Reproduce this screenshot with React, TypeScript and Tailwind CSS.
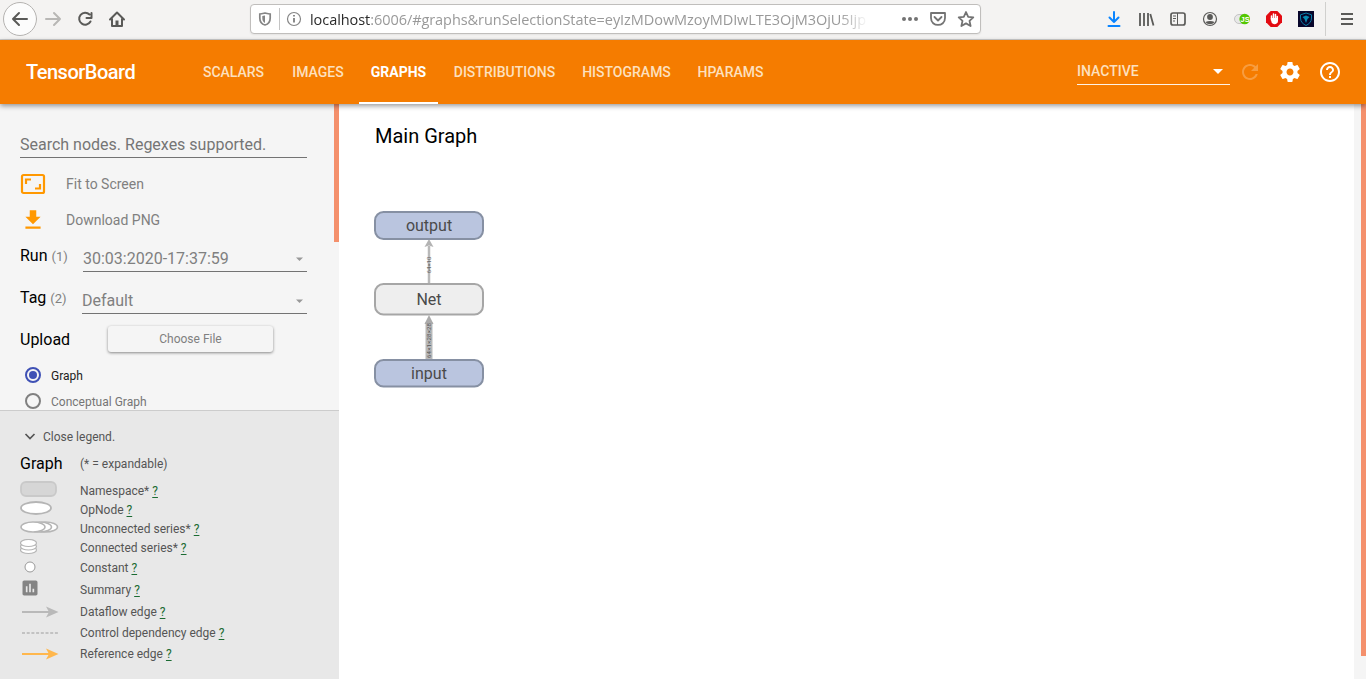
import React from "react";

function Icon({ d, className = "", size = 24 }: { d: string; className?: string; size?: number }) {
  return (
    <svg width={size} height={size} viewBox="0 0 24 24" fill="currentColor" className={`shrink-0 ${className}`}>
      <path d={d} />
    </svg>
  );
}

function BrowserBar() {
  return (
    <header className="flex h-10 shrink-0 items-start border-b border-[#ccc] bg-[#f4f3f2] text-[#5a5a58]">
      <svg width="249" height="39" viewBox="0 0 249 39" fill="none" stroke="currentColor" strokeWidth="2" strokeLinecap="round" strokeLinejoin="round" className="shrink-0">
        <circle cx="20" cy="19" r="16.5" fill="#fcfcfc" stroke="#b5b3b1" strokeWidth="1" />
        <path d="M27 19H13M19 13L13 19L19 25" />
        <path d="M46 19H60M54 13L60 19L54 25" stroke="#b8b7b5" />
        <path d="M89.5 14.5A6 6 0 1 0 90.5 21.5M91.5 13V18H86.5" />
        <path d="M110 19.5L117 12.5L124 19.5M112 18.5V26H122V18.5" />
        <path d="M115.500 20.500h3v5h-3z" fill="currentColor" stroke="none" />
      </svg>
      <div className="mt-1 ml-[1px] flex h-[30px] w-[731px] items-center rounded border border-[#c0bebc] bg-white shadow-[0_1px_2px_#0001]">
        <svg width="58" height="28" viewBox="0 0 58 28" fill="none" stroke="#858585" strokeWidth="1.7" className="shrink-0">
          <path d="M8.8 9C11 9 13 8.2 14 8C15 8.2 17 9 19.200 9V13C19.200 17 17 19.300 14 20C11 19.300 8.800 17 8.800 13Z" />
          <path d="M14 10.500C13 10.700 12 11 11.300 11V13C11.300 16 12.500 17.300 14 18Z" fill="#858585" stroke="none" />
          <path d="M28.500 3V25" stroke="#c4c4c4" strokeWidth="1" />
          <circle cx="43" cy="14" r="6.500" strokeWidth="1.200" />
          <path d="M43 13V17.500M43 10V11.600" strokeWidth="1.900" />
        </svg>
        <div className="w-[559px] shrink-0 pt-0.5 pl-[1px] font-['Open_Sans',sans-serif] text-[14.5px] tracking-[-0.06px] whitespace-nowrap text-[#999] [mask-image:linear-gradient(to_right,black_95%,transparent)]">
          <span className="text-[#2b2b2b]">localhost</span>:6006/#graphs&amp;runSelectionState=eyIzMDowMzoyMDIwLTE3OjM3OjU5Ijp
        </div>
        <svg width="111" height="28" viewBox="868 5 111 28" fill="none" stroke="#737373" strokeWidth="1.8" strokeLinejoin="round" strokeLinecap="round" className="shrink-0">
          <g fill="#737373" stroke="none">
            <circle cx="904" cy="19" r="2" />
            <circle cx="910" cy="19" r="2" />
            <circle cx="916" cy="19" r="2" />
          </g>
          <path d="M932 13H945V18C945 27.300 931 27.300 931 18V13ZM934.500 17L938 20.500L941.500 17" />
          <path d="M966 12L968.200 16.800L973.300 17.400L969.500 20.900L970.600 26L966 23.400L961.400 26L962.500 20.900L958.700 17.400L963.800 16.800Z" />
        </svg>
      </div>
      <svg width="385" height="39" viewBox="981 0 385 39" fill="none" stroke="currentColor" strokeWidth="2" className="shrink-0">
        <g stroke="#0a84ff" strokeLinecap="round" strokeLinejoin="round">
          <path d="M1114 12V22M1109.500 17.500L1114 22L1118.500 17.500M1108.500 26H1119.500" />
        </g>
        <path d="M1140 13V26M1144 13V26M1148 13V26M1150.300 14L1153.500 25.500" strokeWidth="1.8" />
        <rect x="1171" y="13" width="14" height="12" rx="2" strokeWidth="1.7" />
        <path d="M1177.500 13V25M1173 16H1176M1173 18.500H1176M1173 21H1175" strokeWidth="1" />
        <circle cx="1210" cy="19" r="6.500" strokeWidth="1.200" />
        <circle cx="1210" cy="17" r="2.900" fill="currentColor" stroke="none" />
        <path d="M1205.500 22C1208 20.500 1212 20.500 1214.500 22C1212.500 25 1207.500 25 1205.500 22Z" fill="currentColor" stroke="none" />
        <rect x="1234.500" y="14.500" width="13" height="9" rx="4.500" strokeWidth="1" stroke="#c3c3c3" fill="#e8e8e8" />
        <circle cx="1244.700" cy="19" r="5.300" fill="#53c700" stroke="none" />
        <text x="1240.500" y="22" fontSize="7.500" fontWeight="700" fontFamily="Liberation Sans" fill="white" stroke="none">JS</text>
        <path d="M1270.700 11H1277.300L1282 15.700V22.300L1277.300 27H1270.700L1266 22.300V15.700Z" fill="#e30b12" stroke="none" />
        <path d="M1271.500 20V16M1273.500 20V14M1275.500 20V14.500M1277.300 20V16.500" stroke="white" strokeWidth="1.500" strokeLinecap="round" />
        <path d="M1270.700 18H1278V21C1278 25 1272 25 1271.500 22Z" fill="white" stroke="none" />
        <rect x="1298" y="11" width="16" height="16" fill="#08062b" stroke="none" />
        <path d="M1306 13L1311.500 14.800V18C1311.500 22 1309 24 1306 25.500C1303 24 1300.500 22 1300.500 18V14.800Z" stroke="#087da9" strokeWidth="1" />
        <path d="M1306 15.500L1309.500 17L1307.500 19L1306 23L1304.500 19L1302.500 17Z" fill="#088db4" stroke="none" />
        <path d="M1325.500 2V36" stroke="#d0d0ce" strokeWidth="1" />
        <path d="M1341 14H1353M1341 19H1353M1341 24H1353" />
      </svg>
    </header>
  );
}

const tabs = [
  { name: "SCALARS", cls: "w-[89px]" },
  { name: "IMAGES", cls: "w-[80px]" },
  { name: "GRAPHS", cls: "w-[82px]" },
  { name: "DISTRIBUTIONS", cls: "w-[129px]" },
  { name: "HISTOGRAMS", cls: "w-[115px]" },
  { name: "HPARAMS", cls: "w-[93px]" },
];

function Toolbar() {
  return (
    <nav className="z-10 flex h-16 shrink-0 items-center bg-[#f57c00] pr-6 pl-[26px] text-white shadow-[0_2px_5px_rgba(0,0,0,0.4)]">
      <h1 className="w-[163px] text-xl font-medium tracking-[-0.5px]">TensorBoard</h1>
      <div className="flex h-full text-sm font-medium">
        {tabs.map((t) => (
          <div key={t.name} className={`flex h-full flex-col ${t.cls}`}>
            <div className={`flex flex-1 items-center justify-center pt-0.5 ${t.name === "GRAPHS" ? "pr-px font-bold" : "text-[#fde0bf]"}`}>{t.name}</div>
            <div className={`h-0.5 w-[79px] ${t.name === "GRAPHS" ? "ml-[1px] bg-white" : "bg-transparent"}`} />
          </div>
        ))}
      </div>
      <div className="ml-auto flex h-[26px] w-[153px] items-start justify-between border-b border-white/90 text-sm text-[#fde0bf]">
        <span className="pt-0.5 font-medium">INACTIVE</span>
        <Icon d="M7 10l5 5 5-5z" className="text-white" />
      </div>
      <Icon d="M17.65 6.35C16.2 4.9 14.21 4 12 4c-4.42 0-7.99 3.58-7.99 8s3.57 8 7.99 8c3.73 0 6.84-2.55 7.73-6h-2.08c-.82 2.33-3.04 4-5.65 4-3.31 0-6-2.69-6-6s2.69-6 6-6c1.66 0 3.14.69 4.22 1.78L13 11h7V4l-2.35 2.35z" className="ml-2 text-white/25" />
      <Icon d="M19.43 12.98c.04-.32.07-.64.07-.98s-.03-.66-.07-.98l2.11-1.65c.19-.15.24-.42.12-.64l-2-3.46c-.12-.22-.39-.3-.61-.22l-2.49 1c-.52-.4-1.08-.73-1.69-.98l-.38-2.65C14.46 2.18 14.25 2 14 2h-4c-.25 0-.46.18-.49.42l-.38 2.65c-.61.25-1.17.59-1.69.98l-2.49-1c-.23-.09-.49 0-.61.22l-2 3.46c-.13.22-.07.49.12.64l2.11 1.65c-.04.32-.07.65-.07.98s.03.66.07.98l-2.11 1.65c-.19.15-.24.42-.12.64l2 3.46c.12.22.39.3.61.22l2.49-1c.52.4 1.08.73 1.69.98l.38 2.65c.03.24.24.42.49.42h4c.25 0 .46-.18.49-.42l.38-2.65c.61-.25 1.17-.59 1.69-.98l2.49 1c.23.09.49 0 .61-.22l2-3.46c.12-.22.07-.49-.12-.64l-2.11-1.65zM12 15.5c-1.93 0-3.5-1.57-3.5-3.5s1.57-3.5 3.5-3.5 3.5 1.57 3.5 3.5-1.57 3.5-3.5 3.5z" className="ml-4" />
      <Icon d="M11 18h2v-2h-2v2zm1-16C6.48 2 2 6.48 2 12s4.48 10 10 10 10-4.48 10-10S17.52 2 12 2zm0 18c-4.41 0-8-3.59-8-8s3.59-8 8-8 8 3.59 8 8-3.59 8-8 8zm0-14c-2.21 0-4 1.79-4 4h2c0-1.1.9-2 2-2s2 .9 2 2c0 2-3 1.75-3 5h2c0-2.25 3-2.5 3-5 0-2.21-1.79-4-4-4z" className="ml-4" />
    </nav>
  );
}

function SelectField({ label, count, value, width }: { label: string; count: number; value: string; width: string }) {
  return (
    <div className="flex h-[42px] items-start justify-between">
      <div className="pt-0.5 text-base text-black">
        {label} <span className="text-[13px] text-[#808080]">({count})</span>
      </div>
      <div className={`mt-1 flex h-[26px] items-center justify-between border-b border-[#737373] pt-px text-base text-[#808080] ${width}`}>
        {value}
        <svg width="14" height="8" viewBox="0 0 14 8" fill="#999"><path d="M3 2.5H10L6.500 6Z" /></svg>
      </div>
    </div>
  );
}

function Controls() {
  return (
    <div className="flex h-[306px] shrink-0 bg-[#f5f5f5]">
      <div className="w-[307px] overflow-hidden pt-7 pl-5">
        <div className="flex h-[26px] items-center border-b border-[#737373] text-base text-[#757575]">Search nodes. Regexes supported.</div>
        <div className="mt-2 flex h-9 items-center text-sm text-[#808080]">
          <svg width="26" height="22" viewBox="0 0 26 22" fill="none" stroke="#ff9800" strokeWidth="2.2" className="mr-5">
            <rect x="2" y="2" width="22" height="18" rx="1.500" />
            <path d="M6 11V6.500H11M20 11V15.500H15" />
          </svg>
          Fit to Screen
        </div>
        <div className="flex h-9 items-center text-sm text-[#808080]">
          <Icon d="M19 9h-4V3H9v6H5l7 7 7-7zM5 18v2h14v-2H5z" size={26} className="mr-5 text-[#ff9800]" />
          Download PNG
        </div>
        <div className="pt-[4px]">
          <SelectField label="Run" count={1} value="30:03:2020-17:37:59" width="w-[224px]" />
          <SelectField label="Tag" count={2} value="Default" width="w-[225px]" />
        </div>
        <div className="-mt-[3px] flex h-[32px] items-center text-base text-black">
          <span className="w-[88px] pt-0.5">Upload</span>
          <button className="h-[26px] w-[165px] rounded-[3px] bg-[#f5f5f5] text-xs text-[#808080] shadow-[0_1px_3px_rgba(0,0,0,0.45)]">Choose File</button>
        </div>
        <div className="mt-[7px] flex h-[26px] items-center text-xs text-[#212121]">
          <span className="mr-2.5 ml-[5px] flex size-4 items-center justify-center rounded-full border-2 border-[#3f51b5]"><span className="size-2 rounded-full bg-[#3f51b5]" /></span>
          <span className="pt-px">Graph</span>
        </div>
        <div className="flex h-[26px] items-center text-xs text-[#757575]">
          <span className="mr-2.5 ml-[5px] size-4 rounded-full border-2 border-[#808080]" />
          <span className="pt-px">Conceptual Graph</span>
        </div>
      </div>
      <div className="ml-auto h-[138px] w-[5px] bg-[#f4906c]" />
    </div>
  );
}

function Arrow({ color }: { color: string }) {
  return (
    <svg width="40" height="14" viewBox="0 0 40 14" fill={color}>
      <path d="M2 6H29V8H2Z" />
      <path d="M26 1.500L38.500 7L26 12.500L29 7Z" />
    </svg>
  );
}

const legend: { label: string; row: string; icon: React.ReactNode }[] = [
  { label: "Namespace*", row: "h-[19px]", icon: <svg width="40" height="18"><rect x="1" y="1" width="35" height="14" rx="5" fill="#d6d6d6" stroke="#c9c9c9" strokeWidth="1.800" /></svg> },
  { label: "OpNode", row: "h-[19px]", icon: <svg width="40" height="18"><ellipse cx="16" cy="7" rx="15" ry="6" fill="white" stroke="#b5b5b5" strokeWidth="1.800" /></svg> },
  { label: "Unconnected series*", row: "h-[19px]", icon: <svg width="40" height="18" fill="white" stroke="#b5b5b5" strokeWidth="1.500"><ellipse cx="25.500" cy="7" rx="12" ry="5" /><ellipse cx="19.500" cy="7" rx="12" ry="5" /><ellipse cx="13" cy="7" rx="12" ry="5" /></svg> },
  { label: "Connected series*", row: "h-5", icon: <svg width="40" height="18" fill="white" stroke="#b5b5b5" strokeWidth="1.200"><ellipse cx="8.500" cy="11" rx="8" ry="3.500" /><ellipse cx="8.500" cy="7.500" rx="8" ry="3.500" /><ellipse cx="8.500" cy="4" rx="8" ry="3.500" /></svg> },
  { label: "Constant", row: "h-[22px]", icon: <svg width="40" height="18"><circle cx="10" cy="8" r="5" fill="white" stroke="#999" /></svg> },
  { label: "Summary", row: "h-[22px]", icon: <Icon size={20} className="text-[#848484]" d="M19 3H5c-1.100 0-2 .9-2 2v14c0 1.100.9 2 2 2h14c1.100 0 2-.9 2-2V5c0-1.100-.9-2-2-2zM9 17H7v-7h2v7zm4 0h-2V7h2v10zm4 0h-2v-4h2v4z" /> },
  { label: "Dataflow edge", row: "h-[21px]", icon: <Arrow color="#b9b9b9" /> },
  { label: "Control dependency edge", row: "h-[21px]", icon: <svg width="40" height="14"><path d="M2 7H38" stroke="#b5b5b5" strokeWidth="1.500" strokeDasharray="3 1.700" /></svg> },
  { label: "Reference edge", row: "h-[21px]", icon: <Arrow color="#ffb74d" /> },
];

function Legend() {
  return (
    <div className="flex-1 border-t border-[#ccc] bg-[#e8e8e8] pl-5 text-xs text-[#555]">
      <div className="mt-4 flex h-5 items-center">
        <svg width="23" height="14" viewBox="0 0 23 14" fill="none" stroke="#555" strokeWidth="1.700"><path d="M5.500 4L10 8.500L14.500 4" /></svg>
        Close legend.
      </div>
      <div className="mt-1 mb-1.5 flex h-[25px] items-center">
        <span className="w-[60px] text-base text-black">Graph</span>(* = expandable)
      </div>
      {legend.map((l) => (
        <div key={l.label} className={`flex items-start ${l.row}`}>
          <div className={`flex h-[18px] w-[60px] items-center ${l.label === "Summary" ? "-mt-[2px]" : l.label === "Namespace*" ? "-mt-px" : ""}`}>{l.icon}</div>
          <span className="pt-px leading-4">{l.label} <a className="text-[#1b6b32] underline underline-offset-2">?</a></span>
        </div>
      ))}
    </div>
  );
}

function Graph() {
  return (
    <svg width="112" height="180" viewBox="373 210 112 180" fontFamily="Roboto, sans-serif" textAnchor="middle" className="mt-[59px] -ml-[2px]">
      <path d="M429 283V246" stroke="#b9b9b9" strokeWidth="2.500" />
      <path d="M429 239L433.500 247L429 245.500L424.500 247Z" fill="#b3b3b3" />
      <path d="M429 359V322" stroke="#b9b9b9" strokeWidth="7" />
      <path d="M429 315L433.500 324H424.500Z" fill="#aaa" />
      <text transform="translate(431.300 265) rotate(-90)" fontSize="6" fill="#666">64×10</text>
      <text transform="translate(431.300 340.500) rotate(-90)" fontSize="6" textLength="35" fill="#555">64×1×28×28</text>
      <g strokeWidth="2">
        <rect x="375" y="212" width="108" height="27" rx="8.500" fill="#bac5df" stroke="#8690a3" />
        <rect x="375" y="284" width="108" height="30.500" rx="8.500" fill="#eee" stroke="#a6a6a6" />
        <rect x="375" y="360" width="108" height="26.500" rx="8.500" fill="#bac5df" stroke="#8690a3" />
      </g>
      <g fontSize="16" fill="#4a4a4a">
        <text x="429" y="231">output</text>
        <text x="429" y="305">Net</text>
        <text x="429" y="378.500">input</text>
      </g>
    </svg>
  );
}

export default function App() {
  return (
    <div className="flex h-[679px] w-[1366px] flex-col overflow-hidden bg-white font-['Roboto',sans-serif]">
      <BrowserBar />
      <Toolbar />
      <div className="flex min-h-0 flex-1">
        <aside className="flex w-[339px] flex-col">
          <Controls />
          <Legend />
        </aside>
        <main className="flex flex-1 flex-col items-start pt-[17px] pl-9">
          <h2 className="text-xl leading-[30px] text-black">Main Graph</h2>
          <Graph />
        </main>
        <div className="flex w-3 justify-end bg-[#f5f5f5]">
          <div className="h-[552px] w-[5px] bg-[#f4906c]" />
        </div>
      </div>
    </div>
  );
}
